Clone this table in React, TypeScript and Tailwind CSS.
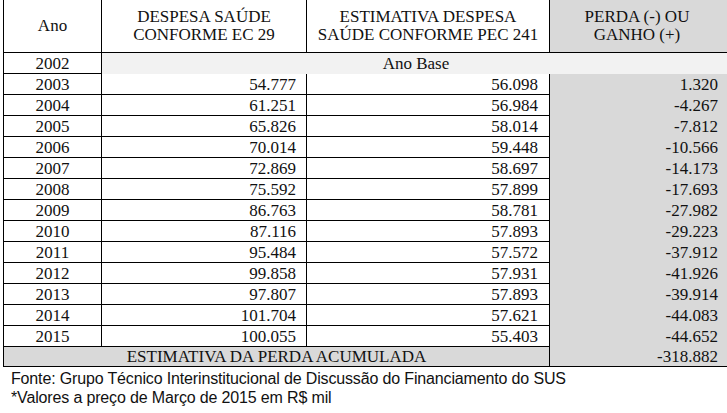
import React from "react";

const rows: [string, string, string, string][] = [
  ["2003", "54.777", "56.098", "1.320"],
  ["2004", "61.251", "56.984", "-4.267"],
  ["2005", "65.826", "58.014", "-7.812"],
  ["2006", "70.014", "59.448", "-10.566"],
  ["2007", "72.869", "58.697", "-14.173"],
  ["2008", "75.592", "57.899", "-17.693"],
  ["2009", "86.763", "58.781", "-27.982"],
  ["2010", "87.116", "57.893", "-29.223"],
  ["2011", "95.484", "57.572", "-37.912"],
  ["2012", "99.858", "57.931", "-41.926"],
  ["2013", "97.807", "57.893", "-39.914"],
  ["2014", "101.704", "57.621", "-44.083"],
  ["2015", "100.055", "55.403", "-44.652"],
];

export default function App() {
  return (
    <div className="w-[727px] h-[413px] overflow-hidden bg-white text-[#111]">
      <div
        className="ml-[3px] w-[740px] border-l border-black text-[17px]"
        style={{ fontFamily: '"Liberation Serif", serif' }}
      >
        <div className="grid h-[53px] grid-cols-[98px_205px_243px_194px] border-b border-black leading-[18px]">
          <div className="flex items-center justify-center border-r border-black">Ano</div>
          <div className="flex flex-col items-center justify-center border-r border-black text-center">
            <span>DESPESA SAÚDE</span>
            <span>CONFORME EC 29</span>
          </div>
          <div className="flex flex-col items-center justify-center border-r border-black text-center">
            <span>ESTIMATIVA DESPESA</span>
            <span>SAÚDE CONFORME PEC 241</span>
          </div>
          <div className="flex flex-col items-center justify-center bg-[#d9d9d9] pr-[20px] text-center">
            <span>PERDA (-) OU</span>
            <span>GANHO (+)</span>
          </div>
        </div>
        <div className="grid h-[21px] grid-cols-[98px_642px] border-b border-black leading-[20px]">
          <div className="flex items-center justify-center border-r border-black pt-[1px]">2002</div>
          <div className="flex items-center justify-center bg-[#f2f2f2] pr-[14px] pt-[1px]">Ano Base</div>
        </div>
        {rows.map((r) => (
          <div
            key={r[0]}
            className="grid h-[21px] grid-cols-[98px_205px_243px_194px] border-b border-black leading-[20px]"
          >
            <div className="flex items-center justify-center border-r border-black pt-[1px]">{r[0]}</div>
            <div className="flex items-center justify-end border-r border-black pr-[10px] pt-[1px]">{r[1]}</div>
            <div className="flex items-center justify-end border-r border-black pr-[11px] pt-[1px]">{r[2]}</div>
            <div className="flex items-center justify-end bg-[#d9d9d9] pr-[26px] pt-[1px]">{r[3]}</div>
          </div>
        ))}
        <div className="grid h-[20px] grid-cols-[546px_194px] border-b border-black bg-[#d9d9d9] leading-[19px]">
          <div className="flex items-center justify-center border-r border-black">ESTIMATIVA DA PERDA ACUMULADA</div>
          <div className="flex items-center justify-end pr-[26px]">-318.882</div>
        </div>
      </div>
      <div
        className="pl-[11px] pt-[2px] text-[16px] leading-[19px] tracking-[-0.15px]"
        style={{ fontFamily: '"Liberation Sans", sans-serif' }}
      >
        <div>Fonte: Grupo Técnico Interinstitucional de Discussão do Financiamento do SUS</div>
        <div>*Valores a preço de Março de 2015 em R$ mil</div>
      </div>
    </div>
  );
}
